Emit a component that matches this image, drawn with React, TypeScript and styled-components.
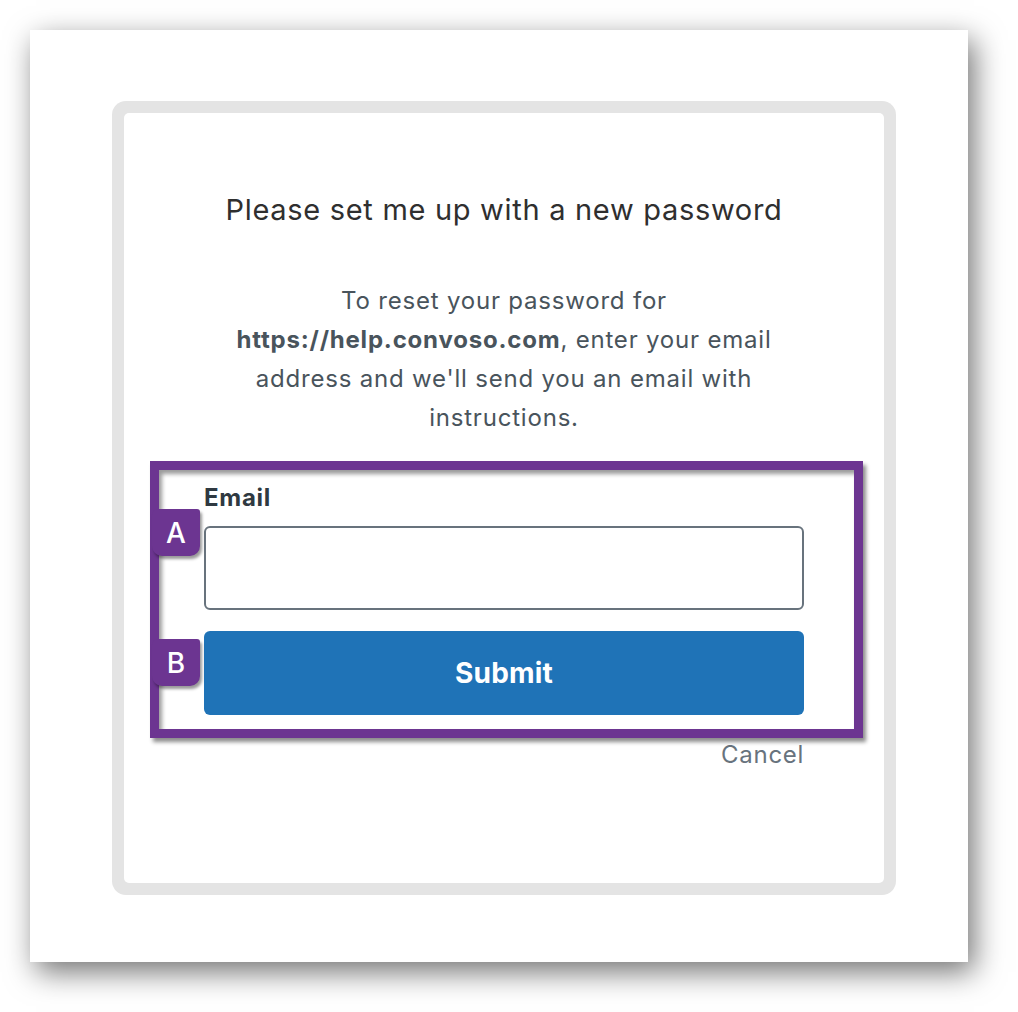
import React from "react";
import styled, { createGlobalStyle } from "styled-components";

const Global = createGlobalStyle`
  html, body { margin: 0; padding: 0; background: #ffffff; }
  body { font-family: Inter, "Noto Sans", "Liberation Sans", sans-serif; }
  * { box-sizing: border-box; }
`;

const Page = styled.div`
  width: 1018px;
  height: 1012px;
  padding: 30px 50px 50px 30px;
  background: #ffffff;
`;

const Sheet = styled.div`
  width: 938px;
  height: 932px;
  background: #ffffff;
  box-shadow: 6px 10px 28px rgba(0, 0, 0, 0.55);
  padding: 71px 72px 0 82px;
`;

const Frame = styled.div`
  height: 794px;
  background: #e4e4e4;
  border-radius: 14px;
  padding: 12px;
`;

const Inner = styled.div`
  height: 100%;
  background: #ffffff;
  border-radius: 5px;
  padding: 80px 80px 0 80px;
  display: flex;
  flex-direction: column;
`;

const Title = styled.h1`
  margin: 0;
  font-size: 29px;
  line-height: 34px;
  letter-spacing: 0.7px;
  font-weight: 400;
  color: #2f2f2f;
  text-align: center;
`;

const Intro = styled.p`
  margin: 54px -10px 0 -10px;
  font-size: 24px;
  line-height: 39px;
  letter-spacing: 0.8px;
  color: #49545c;
  text-align: center;
  strong { font-weight: 700; color: #49545c; }
`;

const Highlight = styled.div`
  position: relative;
  margin: 24px -59px 0 -54px;
  border: 9px solid #6c3591;
  padding: 15px 50px 14px 45px;
  box-shadow: 3px 4px 4px rgba(0, 0, 0, 0.45), inset 3px 4px 4px rgba(0, 0, 0, 0.4);
  display: flex;
  flex-direction: column;
`;

const Label = styled.label`
  font-size: 24px;
  line-height: 26px;
  letter-spacing: 0.7px;
  font-weight: 700;
  color: #2f3941;
`;

const Input = styled.input`
  margin-top: 15px;
  height: 84px;
  width: 100%;
  border: 2px solid #68737d;
  border-radius: 6px;
  background: #ffffff;
  outline: none;
`;

const SubmitButton = styled.button`
  margin-top: 21px;
  height: 84px;
  width: 100%;
  border: none;
  border-radius: 6px;
  background: #1f73b7;
  color: #ffffff;
  font-family: Inter, "Noto Sans", sans-serif;
  font-size: 28px;
  letter-spacing: 0.2px;
  font-weight: 700;
`;

const Badge = styled.div<{ $top: number }>`
  position: absolute;
  left: -7px;
  top: ${(p) => p.$top}px;
  width: 48px;
  height: 47px;
  border-radius: 6px 3px 10px 10px;
  background: #6c3591;
  color: #ffffff;
  box-shadow: 2px 3px 3px rgba(0, 0, 0, 0.4);
  display: flex;
  align-items: center;
  justify-content: center;
  font-family: Inter, "Open Sans", sans-serif;
  font-size: 28px;
  font-weight: 500;
  line-height: 1;
`;

const CancelRow = styled.div`
  margin-top: 3px;
  display: flex;
  justify-content: flex-end;
`;

const Cancel = styled.a`
  font-size: 24px;
  line-height: 28px;
  letter-spacing: 0.7px;
  color: #68737d;
  text-decoration: none;
`;

export default function App() {
  return (
    <>
      <Global />
      <Page>
        <Sheet>
          <Frame>
            <Inner>
              <Title>Please set me up with a new password</Title>
              <Intro>
                To reset your password for
                <br />
                <strong>https://help.convoso.com</strong>, enter your email
                <br />
                address and we'll send you an email with
                <br />
                instructions.
              </Intro>
              <Highlight>
                <Label>Email</Label>
                <Input type="email" />
                <SubmitButton>Submit</SubmitButton>
                <Badge $top={39}>A</Badge>
                <Badge $top={169}>B</Badge>
              </Highlight>
              <CancelRow>
                <Cancel>Cancel</Cancel>
              </CancelRow>
            </Inner>
          </Frame>
        </Sheet>
      </Page>
    </>
  );
}
